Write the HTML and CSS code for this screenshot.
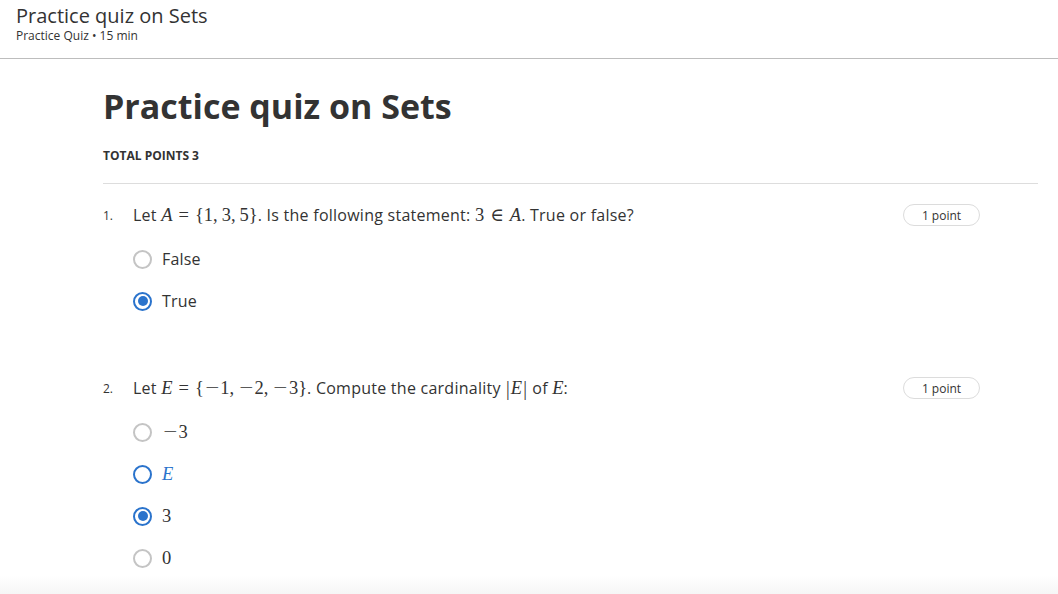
FILE: index.html
```html
<!DOCTYPE html>
<html>
<head>
<meta charset="utf-8">
<link rel="stylesheet" href="styles.css">
</head>
<body>
<header class="topbar">
  <div class="top-title">Practice quiz on Sets</div>
  <div class="top-sub">Practice Quiz • 15 min</div>
</header>
<main class="content">
  <h1 class="quiz-title">Practice quiz on Sets</h1>
  <div class="total">TOTAL POINTS 3</div>
  <div class="divider"></div>

  <section class="question">
    <div class="q-head">
      <span class="q-num">1.</span>
      <div class="q-text">Let <span class="m"><i>A</i><span class="rel">=</span>{1,<span class="th"></span>3,<span class="th"></span>5}</span>. Is the following statement: <span class="m">3<span class="rel">∈</span><i>A</i></span>. True or false?</div>
      <span class="pill">1 point</span>
    </div>
    <div class="options">
      <div class="opt"><span class="radio"></span><span class="label">False</span></div>
      <div class="opt"><span class="radio checked"></span><span class="label">True</span></div>
    </div>
  </section>

  <section class="question q2">
    <div class="q-head">
      <span class="q-num">2.</span>
      <div class="q-text">Let <span class="m"><i>E</i><span class="rel">=</span>{<span class="minus">−</span>1,<span class="th"></span><span class="minus">−</span>2,<span class="th"></span><span class="minus">−</span>3}</span>. Compute the cardinality <span class="m"><span class="bar">|</span><i>E</i><span class="bar">|</span></span> of <span class="m"><i>E</i></span>:</div>
      <span class="pill">1 point</span>
    </div>
    <div class="options">
      <div class="opt"><span class="radio"></span><span class="label m"><span class="minus">−</span>3</span></div>
      <div class="opt"><span class="radio focus"></span><span class="label m blue"><i>E</i></span></div>
      <div class="opt"><span class="radio checked"></span><span class="label m">3</span></div>
      <div class="opt"><span class="radio"></span><span class="label m">0</span></div>
    </div>
  </section>
</main>
<div class="bottom-fade"></div>
</body>
</html>
```
FILE: styles.css
```css
html, body {
  margin: 0;
  padding: 0;
  background: #fff;
  font-family: "Open Sans", "Liberation Sans", sans-serif;
  color: #333;
  height: 594px;
  overflow: hidden;
}
.topbar {
  padding: 4px 16px 0;
  height: 54px;
  border-bottom: 1px solid #bdbdbd;
  box-sizing: content-box;
}
.top-title {
  font-size: 20px;
  line-height: 24px;
  color: #333;
}
.top-sub {
  font-size: 12px;
  line-height: 16px;
  color: #333;
}
.content {
  margin-left: 103px;
  width: 935px;
}
.quiz-title {
  margin: 24px 0 0;
  font-size: 34px;
  line-height: 46px;
  font-weight: 700;
  color: #333;
}
.total {
  margin-top: 19px;
  font-size: 12px;
  line-height: 16px;
  font-weight: 700;
  color: #333;
}
.divider {
  margin-top: 19px;
  height: 1px;
  background: #ddd;
}
.question {
  margin-top: 19px;
}
.q2 {
  margin-top: 64px;
}
.q-head {
  display: flex;
  align-items: center;
  height: 24px;
}
.q-num {
  width: 30px;
  font-size: 12px;
  color: #333;
}
.q-text {
  flex: 1;
  font-size: 16px;
  letter-spacing: 0.25px;
  color: #333;
}
.m {
  font-family: "Liberation Serif", "DejaVu Serif", serif;
  font-size: 18.5px;
  letter-spacing: 0;
  white-space: nowrap;
}
.m i { font-style: italic; }
.rel {
  display: inline-block;
  margin: 0 6px;
}
.th {
  display: inline-block;
  width: 4px;
}
.minus {
  display: inline-block;
  transform: scaleX(1.35);
  margin: 0 3px;
}
.bar {
  display: inline-block;
  transform: scaleY(1.15);
  margin: 0 1px;
}
.pill {
  margin-right: 58px;
  width: 75px;
  height: 20px;
  border: 1px solid #dcdcdc;
  border-radius: 11px;
  display: flex;
  align-items: center;
  justify-content: center;
  font-size: 12px;
  color: #333;
}
.options {
  display: flex;
  flex-direction: column;
  gap: 20px;
  padding-left: 30px;
  margin-top: 21px;
}
.q2 .options { margin-top: 21px; }
.opt {
  display: flex;
  align-items: center;
  height: 22px;
}
.radio {
  width: 15px;
  height: 15px;
  border: 2px solid #c4c4c4;
  border-radius: 50%;
  margin-right: 10px;
  position: relative;
  flex: none;
}
.radio.focus { border-color: #2a73cc; }
.radio.checked { border-color: #2a73cc; }
.radio.checked::after {
  content: "";
  position: absolute;
  left: 2.5px;
  top: 2.5px;
  width: 10px;
  height: 10px;
  border-radius: 50%;
  background: #2a73cc;
}
.label {
  font-size: 16px;
  letter-spacing: 0.2px;
  color: #333;
}
.label.m { font-size: 18.5px; letter-spacing: 0; }
.blue { color: #2a73cc; }
.bottom-fade {
  position: absolute;
  left: 0;
  right: 0;
  top: 576px;
  height: 18px;
  background: linear-gradient(#fff, #f6f6f6);
}
```
